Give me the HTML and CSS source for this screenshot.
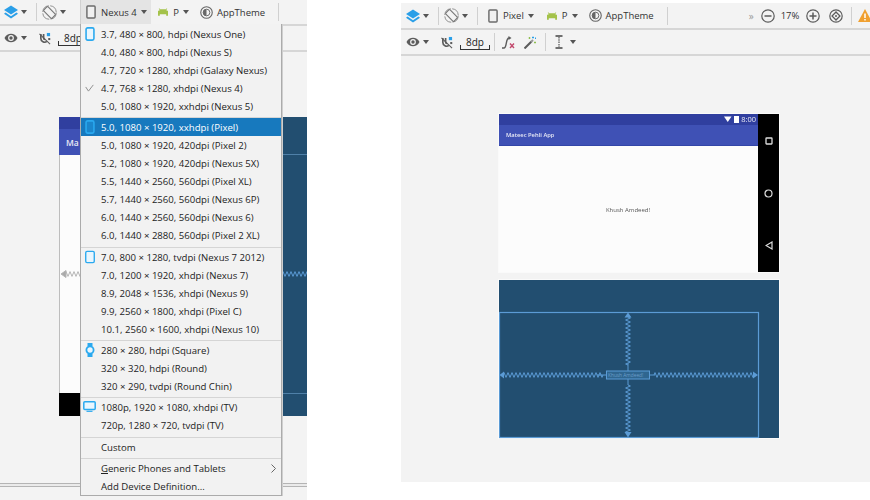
FILE: index.html
```html
<!DOCTYPE html>
<html>
<head>
<meta charset="UTF-8">
<title>Device menu</title>
<link rel="stylesheet" href="styles.css">
</head>
<body>
<svg class="defs" width="0" height="0">
  <defs>
    <symbol id="i-layers" viewBox="0 0 14 14"><path d="M7 0.5 14 5 7 9.5 0 5z" fill="#2a9fe8"/><path d="M1.6 7.6 0 8.8 7 13.5 14 8.8 12.4 7.6 7 11.2z" fill="#2a9fe8"/></symbol>
    <symbol id="i-rotate" viewBox="0 0 16 16"><circle cx="8" cy="8" r="7.2" fill="none" stroke="#8c8c8c" stroke-dasharray="10 1.5"/><rect x="4.8" y="1.8" width="6.4" height="12.4" rx="1" transform="rotate(-45 8 8)" fill="#f3f3f3" stroke="#777" stroke-width="1.2"/></symbol>
    <symbol id="i-phone" viewBox="0 0 11 15"><rect x="1" y="1" width="9" height="13" rx="1" fill="#f0f0f0" stroke="#6b6b6b" stroke-width="1.6"/></symbol>
    <symbol id="i-android" viewBox="0 0 11 8"><path d="M0 2.5h1.5V1L.8 0h.6l.9 1h6.400l.9-1h.6L9.500 1v1.500H11V8H9V6.500H2V8H0z" fill="#a4c24a"/></symbol>
    <symbol id="i-theme" viewBox="0 0 14 14"><circle cx="7" cy="7" r="6.200" fill="none" stroke="#666" stroke-width="1.200"/><circle cx="7" cy="7" r="3.600" fill="none" stroke="#666"/><path d="M7 3.400a3.600 3.600 0 0 0 0 7.200z" fill="#666"/></symbol>
    <symbol id="i-eye" viewBox="0 0 14 10"><path d="M0.500 5C2 2 4.300 0.800 7 0.800S12 2 13.500 5C12 8 9.700 9.200 7 9.200S2 8 0.500 5z" fill="#5c5c5c"/><circle cx="7" cy="5" r="2.900" fill="#f3f3f3"/><circle cx="7" cy="5" r="1.700" fill="#5c5c5c"/></symbol>
    <symbol id="i-magnet" viewBox="0 0 13 13"><path d="M2 1.500V6.500a4 4 0 0 0 6.500 3.100M5 1.500V6a1.500 1.500 0 0 0 1.500 1.500" fill="none" stroke="#5c5c5c" stroke-width="1.800"/><path d="M0.500 1.500 12 12.500" stroke="#5c5c5c" stroke-width="1.200"/><rect x="8.500" y="0.500" width="3.500" height="3.500" fill="#2a9fe8"/><rect x="10" y="6" width="2.200" height="2.200" fill="#5c5c5c"/></symbol>
    <symbol id="i-connect" viewBox="0 0 14 13"><path d="M1 12H3C6 12 4.500 2 8 2" fill="none" stroke="#5c5c5c" stroke-width="1.400"/><path d="M7.500 0 10.500 2 7.500 4z" fill="#5c5c5c"/><path d="M9 7.500 13 12M13 7.500 9 12" stroke="#c2486c" stroke-width="1.400"/></symbol>
    <symbol id="i-wand" viewBox="0 0 13 13"><path d="M0.500 12.500 7.500 5.500" stroke="#5c5c5c" stroke-width="2"/><path d="M7 6 9 4" stroke="#999" stroke-width="2"/><path d="M5.500 1v2M4.500 2h2M11 5.500v2M10 6.500h2" stroke="#8fbf50"/><path d="M9 .5v2M8 1.500h2M11.500 1.500v1.500" stroke="#2a9fe8"/></symbol>
    <symbol id="i-align" viewBox="0 0 8 14"><path d="M0.500 1H7.500M0.500 13H7.500" stroke="#444" stroke-width="1.400"/><path d="M4 2V12" stroke="#555" stroke-width="1.200" stroke-dasharray="1.500 .8"/></symbol>
    <symbol id="i-minus" viewBox="0 0 14 14"><circle cx="7" cy="7" r="6.200" fill="none" stroke="#5c5c5c" stroke-width="1.200"/><path d="M3.500 7H10.500" stroke="#5c5c5c" stroke-width="1.500"/></symbol>
    <symbol id="i-plus" viewBox="0 0 14 14"><circle cx="7" cy="7" r="6.200" fill="none" stroke="#5c5c5c" stroke-width="1.200"/><path d="M3.500 7H10.500M7 3.500V10.500" stroke="#5c5c5c" stroke-width="1.500"/></symbol>
    <symbol id="i-fit" viewBox="0 0 14 14"><circle cx="7" cy="7" r="6.200" fill="none" stroke="#5c5c5c" stroke-width="1.200"/><rect x="4.200" y="4.200" width="5.600" height="5.600" fill="none" stroke="#5c5c5c" stroke-width="1.300" transform="rotate(45 7 7)"/><circle cx="7" cy="7" r="1" fill="#5c5c5c"/></symbol>
    <symbol id="i-warn" viewBox="0 0 14 13"><path d="M7 0 14 13H0z" fill="#f0a030"/><path d="M7 4.500V9M7 10V11.500" stroke="#fff" stroke-width="1.500"/></symbol>
    <symbol id="d-phone" viewBox="0 0 11 16"><rect x="1" y="1" width="9" height="14" rx="1.800" fill="currentColor" stroke="#2aa9ef" stroke-width="1.800"/></symbol>
    <symbol id="d-tablet" viewBox="0 0 11 14"><rect x=".8" y=".8" width="9.400" height="12.400" rx="1.500" fill="currentColor" stroke="#2aa9ef" stroke-width="1.500"/></symbol>
    <symbol id="d-watch" viewBox="0 0 10 14"><path d="M2.500 0h5v3h-5zM2.500 11h5v3h-5z" fill="#2aa9ef"/><circle cx="5" cy="7" r="3.600" fill="currentColor" stroke="#2aa9ef" stroke-width="1.800"/></symbol>
    <symbol id="d-tv" viewBox="0 0 13 11"><rect x=".8" y=".8" width="11.400" height="7.600" rx="1" fill="currentColor" stroke="#2aa9ef" stroke-width="1.500"/><path d="M3.500 10.300H9.500" stroke="#2aa9ef" stroke-width="1.200"/></symbol>
    <path id="zig-long" fill="none" d="M0 0l1-2.400 2 4.800 2-4.800 2 4.800 2-4.800 2 4.800 2-4.800 2 4.800 2-4.800 2 4.800 2-4.800 2 4.800 2-4.800 2 4.800 2-4.800 2 4.800 2-4.800 2 4.800 2-4.800 2 4.800 2-4.800 2 4.800 2-4.800 2 4.800 2-4.800 2 4.800 2-4.800 2 4.800 2-4.800 2 4.800 2-4.800 2 4.800 2-4.800 2 4.800 2-4.800 2 4.800 2-4.800 2 4.800 2-4.800 2 4.800 2-4.800 2 4.800 2-4.800 2 4.800 2-4.800 2 4.800 2-4.800 2 4.800 2-4.800 2 4.800 1-2.400"/>
    <path id="zig-short" fill="none" d="M0 0l1-2.400 2 4.800 2-4.800 2 4.800 2-4.800 2 4.800 2-4.800 2 4.800 2-4.800 2 4.800 2-4.800 2 4.800 2-4.800 2 4.800 2-4.800 2 4.800 2-4.800 2 4.800 2-4.800 2 4.800 2-4.800 2 4.800 2-4.800 2 4.800 1-2.400"/>
  </defs>
</svg>

<div class="panel panel-left">
  <div class="bar bar-first">
    <svg class="ic layers"><use href="#i-layers"/></svg><i class="caret"></i>
    <b class="sep"></b>
    <svg class="ic rotate"><use href="#i-rotate"/></svg><i class="caret"></i>
    <div class="pressed">
      <svg class="ic phone"><use href="#i-phone"/></svg><span class="lbl">Nexus 4</span><i class="caret"></i>
    </div>
    <svg class="ic android"><use href="#i-android"/></svg><span class="lbl api">P</span><i class="caret"></i>
    <svg class="ic theme"><use href="#i-theme"/></svg><span class="lbl">AppTheme</span>
    <b class="sep sep-end"></b>
  </div>
  <div class="bar">
    <svg class="ic eye"><use href="#i-eye"/></svg><i class="caret"></i>
    <svg class="ic magnet"><use href="#i-magnet"/></svg>
    <span class="ruler">8dp</span>
  </div>
  <div class="canvas">
    <div class="surface left-phone">
      <div class="status"></div>
      <div class="appbar"><span class="apptitle">Ma</span></div>
      <div class="screen">
        <svg class="left-zig" width="21" height="10"><use href="#zig-short" x="5" y="5"/><path d="M1 5 6 1.500V8.500z" fill="#aaa"/></svg>
      </div>
      <div class="navbar-bottom"></div>
    </div>
    <div class="surface left-print">
      <div class="print-top"></div>
      <div class="print-mid"><svg class="zig-blue" width="25" height="6"><use href="#zig-short" y="3"/></svg></div>
    </div>
  </div>
  <div class="foot"></div>

  <div class="menu">
    <div class="item"><svg class="dev"><use href="#d-phone"/></svg>3.7, 480 × 800, hdpi (Nexus One)</div>
    <div class="item">4.0, 480 × 800, hdpi (Nexus S)</div>
    <div class="item">4.7, 720 × 1280, xhdpi (Galaxy Nexus)</div>
    <div class="item"><svg class="dev dev-check" viewBox="0 0 13 11"><path d="M1 4 5 10 12 1" fill="none" stroke="#8e8e8e" stroke-width="1.400"/></svg>4.7, 768 × 1280, xhdpi (Nexus 4)</div>
    <div class="item">5.0, 1080 × 1920, xxhdpi (Nexus 5)</div>
    <div class="rule"></div>
    <div class="item item-on"><svg class="dev"><use href="#d-phone"/></svg>5.0, 1080 × 1920, xxhdpi (Pixel)</div>
    <div class="item">5.0, 1080 × 1920, 420dpi (Pixel 2)</div>
    <div class="item">5.2, 1080 × 1920, 420dpi (Nexus 5X)</div>
    <div class="item">5.5, 1440 × 2560, 560dpi (Pixel XL)</div>
    <div class="item">5.7, 1440 × 2560, 560dpi (Nexus 6P)</div>
    <div class="item">6.0, 1440 × 2560, 560dpi (Nexus 6)</div>
    <div class="item">6.0, 1440 × 2880, 560dpi (Pixel 2 XL)</div>
    <div class="rule"></div>
    <div class="item"><svg class="dev"><use href="#d-tablet"/></svg>7.0, 800 × 1280, tvdpi (Nexus 7 2012)</div>
    <div class="item">7.0, 1200 × 1920, xhdpi (Nexus 7)</div>
    <div class="item">8.9, 2048 × 1536, xhdpi (Nexus 9)</div>
    <div class="item">9.9, 2560 × 1800, xhdpi (Pixel C)</div>
    <div class="item">10.1, 2560 × 1600, xhdpi (Nexus 10)</div>
    <div class="rule"></div>
    <div class="item"><svg class="dev"><use href="#d-watch"/></svg>280 × 280, hdpi (Square)</div>
    <div class="item">320 × 320, hdpi (Round)</div>
    <div class="item">320 × 290, tvdpi (Round Chin)</div>
    <div class="rule"></div>
    <div class="item"><svg class="dev dev-tv"><use href="#d-tv"/></svg>1080p, 1920 × 1080, xhdpi (TV)</div>
    <div class="item">720p, 1280 × 720, tvdpi (TV)</div>
    <div class="rule"></div>
    <div class="item">Custom</div>
    <div class="rule"></div>
    <div class="item item-sub"><span><u>G</u>eneric Phones and Tablets</span><svg width="5" height="9"><path d="M.5 .5 4.500 4.500 .5 8.500" fill="none" stroke="#666"/></svg></div>
    <div class="item">Add Device Definition...</div>
  </div>
</div>

<div class="panel panel-right">
  <div class="bar bar-first">
    <svg class="ic layers"><use href="#i-layers"/></svg><i class="caret"></i>
    <b class="sep"></b>
    <svg class="ic rotate"><use href="#i-rotate"/></svg><i class="caret"></i>
    <b class="sep"></b>
    <svg class="ic phone phone-r"><use href="#i-phone"/></svg><span class="lbl">Pixel</span><i class="caret"></i>
    <svg class="ic android"><use href="#i-android"/></svg><span class="lbl api">P</span><i class="caret"></i>
    <svg class="ic theme"><use href="#i-theme"/></svg><span class="lbl">AppTheme</span>
    <b class="sep sep-end"></b>
    <span class="more">»</span>
    <svg class="ic zoom-ic"><use href="#i-minus"/></svg>
    <span class="lbl pct">17%</span>
    <svg class="ic zoom-ic"><use href="#i-plus"/></svg>
    <svg class="ic zoom-ic fit"><use href="#i-fit"/></svg>
    <b class="sep sep-zoom"></b>
    <svg class="ic warn"><use href="#i-warn"/></svg>
  </div>
  <div class="bar">
    <svg class="ic eye"><use href="#i-eye"/></svg><i class="caret"></i>
    <svg class="ic magnet"><use href="#i-magnet"/></svg>
    <span class="ruler">8dp</span>
    <b class="sep sep-ruler"></b>
    <svg class="ic connect"><use href="#i-connect"/></svg>
    <svg class="ic wand"><use href="#i-wand"/></svg>
    <b class="sep sep-wand"></b>
    <svg class="ic align"><use href="#i-align"/></svg><i class="caret caret-align"></i>
  </div>
  <div class="canvas">
    <div class="surface right-phone">
      <div class="phone-main">
        <div class="status status-r">
          <svg width="15" height="7"><path d="M0 .5H7.500L3.750 6z" fill="#fff"/><rect x="10" y="0" width="5" height="7" fill="#fff"/></svg>
          <span class="clock">8:00</span>
        </div>
        <div class="appbar appbar-r"><span class="apptitle">Mateec Pehli App</span></div>
        <div class="screen screen-r"><span class="hello">Khush Amdeed!</span></div>
      </div>
      <div class="navbar-side">
        <svg width="8" height="8"><rect x="1" y="1" width="6" height="6" rx=".5" fill="none" stroke="#ddd" stroke-width="1.300"/></svg>
        <svg width="9" height="9"><circle cx="4.500" cy="4.500" r="3.500" fill="none" stroke="#ddd" stroke-width="1.200"/></svg>
        <svg width="8" height="9"><path d="M7 1V8L1 4.500z" fill="none" stroke="#ddd" stroke-width="1.200"/></svg>
      </div>
    </div>
    <div class="surface right-print">
      <svg class="print-svg zig-blue" width="281" height="159" viewBox="0 0 281 159">
        <rect x=".5" y="32.500" width="259" height="125" fill="none" stroke-width="1.200"/>
        <rect x="107.500" y="91" width="43" height="8" fill="#2f6690"/>
        <text class="print-txt" x="109" y="97">Khush Amdeed!</text>
        <path d="M129 83V91M129 99V105M98 95H107.500M150.500 95H156"/>
        <use href="#zig-short" transform="translate(129 37) rotate(90)"/>
        <use href="#zig-short" transform="translate(129 105) rotate(90)"/>
        <use href="#zig-long" x="4" y="95"/>
        <use href="#zig-long" x="155" y="95"/>
        <path stroke="none" fill="#5b9bd5" d="M129 32.500 132.500 37.500H125.500zM129 157.500 132.500 152H125.500zM.5 95 5 91.500V98.500zM259 95 254 91.500V98.500z"/>
      </svg>
    </div>
  </div>
</div>
</body>
</html>
```

FILE: styles.css
```css
html, body {
  margin: 0;
  padding: 0;
  background: #fff;
}
body {
  width: 870px;
  height: 500px;
  overflow: hidden;
  display: flex;
  gap: 94px;
  font-family: "Open Sans", "Liberation Sans", sans-serif;
  font-size: 9.6px;
  color: #222;
}
.defs { position: absolute; }

.panel {
  position: relative;
  display: flex;
  flex-direction: column;
  background: #f3f3f3;
  overflow: hidden;
}
.panel-left { width: 307px; height: 500px; }
.panel-right { width: 469px; height: 479px; margin-top: 3px; }

/* toolbars */
.bar {
  flex: none;
  display: flex;
  align-items: center;
  height: 24px;
  padding-left: 4px;
  border-bottom: 2px solid #d6d6d6;
}
.panel-right .bar { padding-left: 5px; }
.panel-right .bar-first { height: 25px; }
.ic { display: block; flex: none; }
.caret {
  flex: none;
  width: 0;
  height: 0;
  margin-left: 3px;
  border-left: 3.5px solid transparent;
  border-right: 3.5px solid transparent;
  border-top: 4px solid #555;
}
.lbl + .caret { margin-left: 4px; }
.caret-align { margin-left: 6.5px; }
.sep {
  flex: none;
  width: 1px;
  height: 18px;
  margin: 0 5px 0 9px;
  background: #d0d0d0;
}
.lbl { font-size: 9.5px; color: #333; white-space: nowrap; }
.api { margin-left: 5px; }
.layers { width: 14px; height: 14px; }
.rotate { width: 15px; height: 15px; }
.phone { width: 10px; height: 14px; margin-right: 5px; }
.phone-r { margin-left: 5px; }
.android { width: 10px; height: 8px; margin-left: 13px; }
.theme { width: 13px; height: 13px; margin-left: 11px; margin-right: 4px; }
.sep-end { margin-left: 13px; }
.sep-zoom { margin: 0 6px 0 8px; }
.sep-ruler { margin-left: 4px; }
.sep-wand { margin-left: 8px; }
.pressed {
  display: flex;
  align-items: center;
  height: 24px;
  margin-left: 14px;
  padding: 0 4.5px 0 5px;
  background: #e4e4e4;
  border-left: 1px solid #d0d0d0;
}
.pressed + .android { margin-left: 7px; }
.eye { width: 14px; height: 10px; }
.magnet { width: 12px; height: 13px; margin-left: 12px; }
.ruler {
  margin-left: 7px;
  width: 30px;
  flex: none;
  text-align: center;
  font-size: 10px;
  line-height: 15px;
  color: #222;
  background:
    linear-gradient(#333, #333) left bottom / 1px 5px no-repeat,
    linear-gradient(#333, #333) right bottom / 1px 5px no-repeat,
    linear-gradient(#333, #333) left bottom / 100% 1px no-repeat;
}
.connect { width: 14px; height: 13px; margin-left: 1px; }
.wand { width: 13px; height: 13px; margin-left: 9px; }
.align { width: 8px; height: 14px; margin-left: 4px; }
.more { margin-left: 76px; width: 6px; color: #999; font-size: 10px; }
.zoom-ic { width: 14px; height: 14px; margin-left: 7px; }
.fit { margin-left: 9px; }
.pct { margin-left: 6px; }
.warn { width: 14px; height: 13px; }

/* design surfaces, free on the canvas */
.canvas { position: relative; flex: 1; }
.surface { position: absolute; }
.zig-blue { stroke: #5b9bd5; }
.left-phone {
  left: 59px;
  top: 65px;
  width: 223px;
  height: 299px;
  display: flex;
  flex-direction: column;
}
.status { flex: none; height: 12px; background: #303f9f; }
.appbar {
  flex: none;
  display: flex;
  align-items: center;
  height: 26px;
  padding-left: 7px;
  background: #3f51b5;
  box-sizing: border-box;
}
.apptitle { font-size: 8.5px; font-weight: 600; color: #e8eaf6; white-space: nowrap; }
.screen {
  flex: 1;
  background: #fcfcfc;
  border-left: 1px solid #bdbdbd;
  display: flex;
  align-items: center;
}
.left-zig { stroke: #b5b5b5; }
.navbar-bottom { flex: none; height: 23px; background: #000; }
.left-print {
  left: 282px;
  top: 65px;
  width: 25px;
  height: 299px;
  display: flex;
  flex-direction: column;
  background: #224e70;
}
.print-top {
  flex: none;
  height: 37px;
  border-bottom: 1px solid #4f80a8;
}
.print-mid {
  flex: 1;
  display: flex;
  align-items: center;
  border-bottom: 1px solid #4f80a8;
  margin-bottom: 22px;
}
.right-phone {
  left: 98px;
  top: 58px;
  display: flex;
  width: 280px;
  height: 158px;
  box-shadow: 0 0 0 1px #fafafa;
}
.phone-main { flex: 1; display: flex; flex-direction: column; }
.status-r {
  height: 11px;
  display: flex;
  align-items: center;
  justify-content: flex-end;
  gap: 2px;
  padding-right: 2px;
}
.clock { font-size: 7.5px; color: #e8e8f4; line-height: 11px; filter: blur(.3px); }
.appbar-r { height: 21px; border-bottom: 1px solid #3346a8; }
.appbar-r .apptitle { font-size: 5.8px; filter: blur(.25px); }
.screen-r { justify-content: center; border-left: 0; background: #fcfcfc; }
.hello { font-size: 6px; color: #555; margin-left: -1px; margin-top: 2px; filter: blur(.25px); }
.navbar-side {
  flex: none;
  width: 21px;
  display: flex;
  flex-direction: column;
  align-items: center;
  justify-content: space-between;
  padding: 23px 0 22px;
  box-sizing: border-box;
  background: #000;
}
.right-print {
  left: 98px;
  top: 224px;
  width: 280px;
  height: 158px;
  background: #224e70;
  box-shadow: 0 0 0 1px #fafafa;
}
.print-svg { display: block; }
.print-txt { font-size: 4.8px; fill: #6c9ec9; stroke: none; font-family: "Open Sans", sans-serif; }

.foot {
  flex: none;
  height: 2px;
  margin-bottom: 13px;
  background: #eaeaea;
  border-top: 1px solid #b4b4b4;
  border-bottom: 1px solid #b4b4b4;
}

/* device dropdown */
.menu {
  position: absolute;
  left: 80px;
  top: 24px;
  width: 200px;
  height: 470px;
  padding-top: 1px;
  background: #f2f2f2;
  border: 1px solid #ababab;
  border-top: 0;
  box-shadow: 1px 0 0 #cfcfcf;
}
.item {
  position: relative;
  height: 18px;
  line-height: 19px;
  padding-left: 20px;
  color: #222;
  white-space: nowrap;
}
.item-on { background: #1779be; color: #fff; }
.item-sub { display: flex; align-items: center; justify-content: space-between; padding-right: 5px; }
.dev {
  position: absolute;
  left: 4px;
  top: 2px;
  width: 10px;
  height: 14px;
  color: #e9f6fe;
}
.item-on .dev { color: #1b86cc; }
.dev-check { width: 9px; height: 8px; top: 5px; }
.dev-tv { left: 2px; top: 3px; width: 13px; height: 11px; }
.rule {
  height: 3.35px;
  box-sizing: border-box;
  border-bottom: 1px solid #d5d5d5;
}
```
